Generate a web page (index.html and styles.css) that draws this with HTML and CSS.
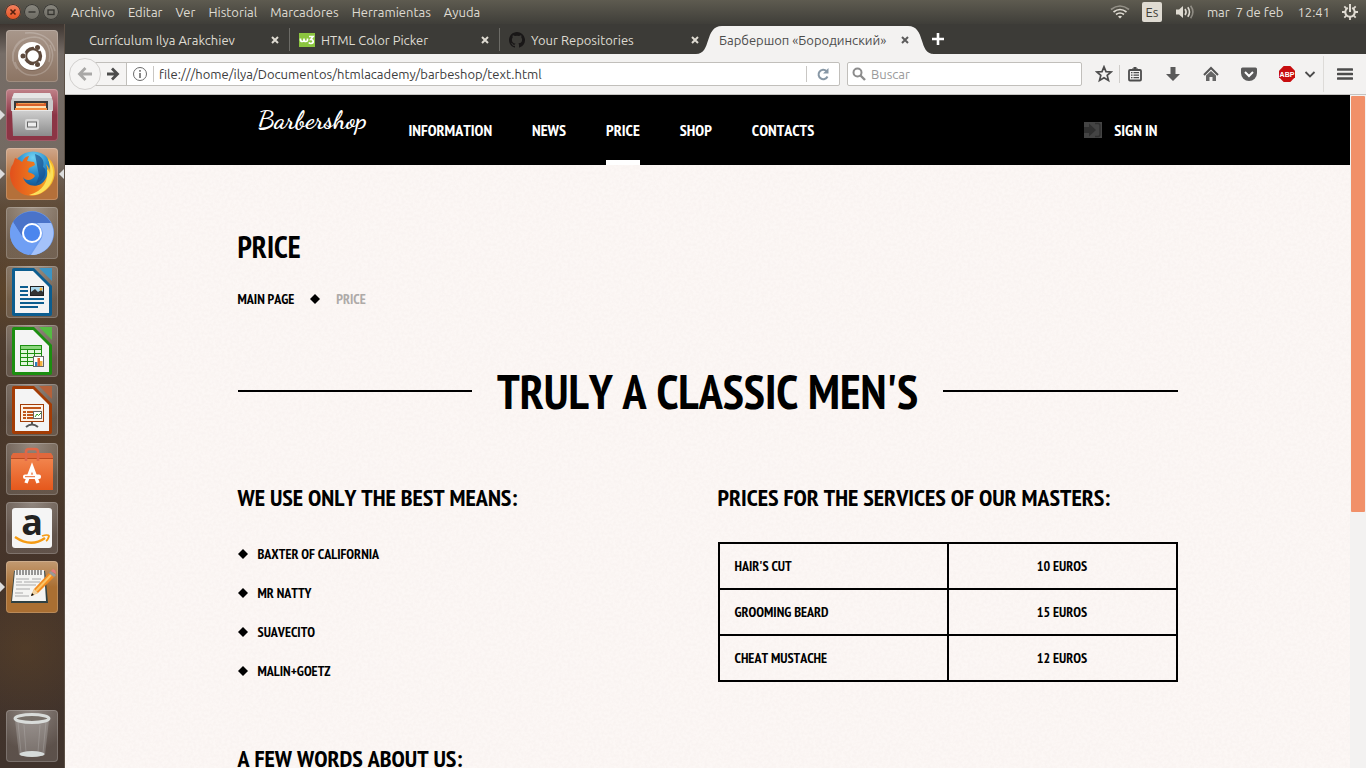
FILE: index.html
```html
<!DOCTYPE html>
<html lang="es">
<head>
<meta charset="utf-8">
<title>Барбершоп «Бородинский»</title>
<link rel="stylesheet" href="styles.css">
</head>
<body>
<header class="panel">
  <div class="window-controls">
    <button class="wc wc-close" aria-label="Cerrar"><svg viewBox="0 0 16 16" width="16" height="16"><path d="M5.5 5.5l5 5M10.500 5.500l-5 5" stroke="#53200f" stroke-width="1.600"/></svg></button>
    <button class="wc" aria-label="Minimizar"><svg viewBox="0 0 16 16" width="16" height="16"><path d="M4.500 8h7" stroke="#34332e" stroke-width="1.400"/></svg></button>
    <button class="wc" aria-label="Maximizar"><svg viewBox="0 0 16 16" width="16" height="16"><rect x="5" y="6" width="6" height="4.500" fill="none" stroke="#34332e" stroke-width="1.300"/></svg></button>
  </div>
  <nav class="app-menu" aria-label="Menú">
    <button>Archivo</button><button>Editar</button><button>Ver</button><button>Historial</button><button>Marcadores</button><button>Herramientas</button><button>Ayuda</button>
  </nav>
  <div class="indicators">
    <svg viewBox="0 0 20 16" width="20" height="16" fill="none" stroke="#dfdbd2" stroke-width="1.700"><path d="M1 5.500Q10-1.500 19 5.500" opacity=".45"/><path d="M3.500 8Q10 3 16.500 8"/><path d="M6 10.500Q10 7.500 14 10.500"/><path d="M8 12.500Q10 11.200 12 12.500L10 14.500z" fill="#dfdbd2" stroke="none"/></svg>
    <span class="lang">Es</span>
    <svg class="sound" viewBox="0 0 20 16" width="20" height="16" fill="none" stroke="#dfdbd2" stroke-width="1.600"><path d="M1 5.500h3L8 2v12l-4-3.500H1z" fill="#dfdbd2" stroke="none"/><path d="M10 5q2.200 3 0 6M12.800 3.300q3.400 4.700 0 9.400"/><path d="M15.600 1.800q4.600 6.200 0 12.400" opacity=".45"/></svg>
    <span class="date">mar&nbsp; 7 de feb</span>
    <span class="time">12:41</span>
    <svg viewBox="0 0 16 16" width="16" height="16" fill="none" stroke="#dfdbd2"><path d="M5.800 3.900a4.700 4.700 0 1 0 4.400 0" stroke-width="2"/><path d="M8 0v8" stroke-width="2"/><path d="M2.300 2.300l2 2M13.700 2.300l-2 2M0 8h3M13 8h3M2.300 13.700l2-2M13.700 13.700l-2-2M8 13v3" stroke-width="1.800"/></svg>
  </div>
</header>

<div class="desktop">
  <aside class="launcher" aria-label="Lanzador">
    <button class="tile tile-dash" aria-label="Inicio"><svg viewBox="0 0 52 52">
      <g fill="none" stroke="#fff" opacity=".2" stroke-width="1.500"><path d="M7 31C5 18 15 7 29 7c12 1 17 13 14 25"/><path d="M11 39C3 28 7 14 18 9M44 15c7 14-1 28-14 30C18 47 11 39 9 32M19 3C33 1 46 8 49 21"/></g>
      <circle cx="26" cy="27" r="14" fill="#5d493c" opacity=".35"/><circle cx="26" cy="26" r="14" fill="#fff"/>
      <circle cx="27" cy="26" r="7.500" fill="none" stroke="#5d493c" stroke-width="3.400"/>
      <path d="M19.500 26H18M30.700 19.600l1-1.700M30.700 32.400l1 1.700" stroke="#fff" stroke-width="7"/>
      <g fill="#5d493c"><circle cx="17" cy="26" r="2.500"/><circle cx="31.500" cy="17.500" r="2.500"/><circle cx="31.500" cy="34.500" r="2.500"/></g></svg></button>
    <button class="tile tile-files running" aria-label="Archivos"><svg viewBox="0 0 52 52">
      <defs><linearGradient id="steel" x2="0" y2="1"><stop stop-color="#d0d0d0"/><stop offset="1" stop-color="#8c8c8c"/></linearGradient></defs>
      <path d="M8 4h36l3 8v10H5V12z" fill="#c9c9c9"/><path d="M8 4h36l2 5H6z" fill="#e6e6e6"/><rect x="8" y="12" width="34" height="10" fill="#383838"/>
      <path d="M10 14h30v8H10z" fill="#d9622b"/><path d="M12 14.500h26" stroke="#f19a50"/><path d="M10 17h30v5H10z" fill="#fce1b5"/><path d="M9 19h32v4H9z" fill="#f58b3c"/>
      <path d="M6 21h40v26H7z" fill="url(#steel)"/><path d="M6 21.500h40" stroke="#e8e8e8"/><rect x="19" y="30" width="14" height="11" rx="2" fill="#d9d9d9"/><rect x="21.500" y="33" width="9" height="5" fill="#eee" stroke="#666"/></svg></button>
    <button class="tile tile-firefox running focused" aria-label="Firefox"><svg viewBox="0 0 52 52">
      <defs><radialGradient id="globe" cx=".5" cy=".15" r=".9"><stop stop-color="#6fd2f3"/><stop offset=".5" stop-color="#1e7fc4"/><stop offset="1" stop-color="#103567"/></radialGradient><linearGradient id="fox" x2="1" y2="0"><stop stop-color="#e2501c"/><stop offset=".6" stop-color="#ef7d1e"/><stop offset="1" stop-color="#f9c62c"/></linearGradient></defs>
      <circle cx="27" cy="24" r="20.500" fill="url(#globe)"/>
      <path d="M29 6c7 2 10 7 8 13 4 2 3 8 0 12l-7 5 3-8z" fill="#174b8b" opacity=".65"/>
      <path d="M9 10c3 1 5 2 7 4 2-4 4-6 7-6l-2 5 7 1 1 3-6 3-1 4c2 1 5 1 7 4-3 5-10 5-12 1 2 8 11 11 18 7 7-5 8-13 5-20 2 2 3 4 3 6 2-4 0-10-3-14 9 6 11 17 6 27C38 48 23 52 12 43 3 36 2 22 7 16z" fill="url(#fox)"/>
      <path d="M42 11c8 10 7 24-4 32-5 4-10 5-15 4 14-4 20-14 18-26 2 2 3 4 3 6 1-6 0-11-2-16z" fill="#fbe05a"/></svg></button>
    <button class="tile" aria-label="Chromium"><svg viewBox="0 0 52 52">
      <circle cx="26" cy="26" r="22" fill="#6b9cf0"/><path d="M7 15A22 22 0 0 1 45 16H26a10 10 0 0 0-9 6l-1 8z" fill="#4a73c9"/><path d="M7 15a22 22 0 0 0 16 33l9-14c-6 4-14 1-16-5z" fill="#6f9ff4"/><path d="M45 16a22 22 0 0 1-20 32l9-14c4-5 4-12-3-18z" fill="#a4c2fa"/>
      <circle cx="26" cy="26" r="10" fill="#fff"/><circle cx="26" cy="26" r="8" fill="#4b86ee"/></svg></button>
    <button class="tile" aria-label="Writer"><svg viewBox="0 0 52 52">
      <path d="M8 2h20l18 18v28q0 2-2 2H8q-2 0-2-2V4q0-2 2-2z" fill="#0c5d8f"/><path d="M33 2h13v13z" fill="#3d94c3"/><path d="M9 5h18l16 16v26H9z" fill="#f4f4f4"/>
      <path d="M14 21h8M14 25h8M14 29h8M14 33h24M14 37h24M14 41h18" stroke="#0c5d8f" stroke-width="1.800"/><rect x="24.500" y="20.500" width="13" height="9" fill="#a9d7ec" stroke="#222"/><path d="M25 29v-3l4-3 3 3 3-2 2 2v3z" fill="#333"/><circle cx="35" cy="23" r="1.500" fill="#f9b233"/></svg></button>
    <button class="tile" aria-label="Calc"><svg viewBox="0 0 52 52">
      <path d="M8 2h20l18 18v28q0 2-2 2H8q-2 0-2-2V4q0-2 2-2z" fill="#1c8e10"/><path d="M33 2h13v13z" fill="#55bb43"/><path d="M9 5h18l16 16v26H9z" fill="#f4f4f4"/>
      <rect x="14.500" y="20.500" width="21" height="20" fill="#e2f7dc" stroke="#1c8e10"/><path d="M15 24.500h20M15 28.500h20M15 32.500h20M15 36.500h20M21.500 21v19M28.500 21v19" stroke="#1c8e10"/><path d="M15 21h20v3H15z" fill="#8bd67c"/>
      <rect x="27.500" y="31.500" width="10" height="10" fill="#fff" stroke="#666"/><path d="M29 37h2.500v4H29z" fill="#2b7fc0"/><path d="M31.500 33H34v8h-2.500z" fill="#e0642c"/><path d="M34 36h2.500v5H34z" fill="#f3b33c"/></svg></button>
    <button class="tile" aria-label="Impress"><svg viewBox="0 0 52 52">
      <path d="M8 2h20l18 18v28q0 2-2 2H8q-2 0-2-2V4q0-2 2-2z" fill="#a33c05"/><path d="M33 2h13v13z" fill="#b5613a"/><path d="M9 5h18l16 16v26H9z" fill="#f4f4f4"/>
      <path d="M26 38v3M20 43q6-5 12 0" stroke="#555" stroke-width="2" fill="none"/><rect x="14.500" y="20.500" width="23" height="17" fill="#fdf1e5" stroke="#a33c05"/><path d="M17 24h18M17 28h3M17 31h3M17 34h3M21 28h6M21 31h6M21 34h6" stroke="#c05519" stroke-width="1.800"/><rect x="27.500" y="27.500" width="8" height="7" fill="#fff" stroke="#666"/><path d="M29 33l2-3 1.500 1.500L35 29" stroke="#2c9a20" fill="none"/></svg></button>
    <button class="tile" aria-label="Software"><svg viewBox="0 0 52 52">
      <defs><linearGradient id="bag" x2="0" y2="1"><stop stop-color="#f2854e"/><stop offset="1" stop-color="#e5581c"/></linearGradient></defs>
      <path d="M5 15h42v32H5z" fill="url(#bag)"/><path d="M5 13l2-3h38l2 3v3H5z" fill="#e0683c"/><path d="M5 15.500h42" stroke="#b94a20"/><path d="M20 18V9q0-3 3-3h6q3 0 3 3v9" fill="none" stroke="#df6747" stroke-width="2.600"/>
      <path d="M20 40l6-16 6 16" fill="none" stroke="#fff" stroke-width="3.400"/><rect x="17" y="31.500" width="18" height="4.500" rx="2" fill="#fff"/><path d="M19 33.700h10" stroke="#e9682f"/></svg></button>
    <button class="tile" aria-label="Amazon"><svg viewBox="0 0 52 52">
      <rect x="6" y="6" width="40" height="40" rx="3" fill="#f5f5f5"/><text x="26" y="33" text-anchor="middle" class="amazon">a</text><path d="M9 35q16 11 30 1" fill="none" stroke="#f59b13" stroke-width="2.400"/><path d="M36 34q6-2 7 0-1 4-3 5" fill="none" stroke="#f59b13" stroke-width="1.800"/></svg></button>
    <button class="tile tile-edit running" aria-label="Editor de textos"><svg viewBox="0 0 52 52">
      <path d="M8 10h31l3 32H5z" fill="#2f4143"/><path d="M9 9h29l2 31H6z" fill="#f4f4f2"/><path d="M11 9v5M14 9v5M17 9v5M20 9v5M23 9v5M26 9v5M29 9v5M32 9v5M35 9v5" stroke="#777" stroke-width="1.500"/><path d="M10 18h13M26 18h9M10 21h6M18 21h16M10 24h20M10 28h14M9 32h8M9 35h14" stroke="#aaa"/>
      <path d="M25 35l3-7L43 12l5 4-16 16z" fill="#f28c22"/><path d="M30 30L45 14" stroke="#fbc667" stroke-width="2"/><path d="M25 35l3-7 4 4z" fill="#f0d4a4"/><path d="M25 35l1-3 2 2z"/><path d="M43 12l2-2 5 4-2 2z" fill="#999"/><path d="M45 10l2-2q3 1 3 5z" fill="#e87a7c"/></svg></button>
    <button class="tile tile-trash" aria-label="Papelera"><svg viewBox="0 0 52 52">
      <path d="M9 10h34l-4 35q-13 4-26 0z" fill="#ddd" opacity=".25"/><path d="M12 12l3 31M40 12l-3 31M18 15l2 27M34 15l-2 27" stroke="#ddd" opacity=".2"/><ellipse cx="26" cy="44" rx="12.500" ry="3" fill="#d6dbda"/><ellipse cx="26" cy="8.500" rx="17" ry="4" fill="#776f68" stroke="#d9dcda" stroke-width="3"/></svg></button>
  </aside>

  <div class="browser">
    <div class="tabs">
      <div class="tab"><span class="tab-title">Currículum Ilya Arakchiev</span><button class="tab-close" aria-label="Cerrar pestaña"><svg viewBox="0 0 8 8" width="8" height="8"><path d="M1 1l6 6M7 1L1 7"/></svg></button></div>
      <div class="tab"><svg class="favicon" viewBox="0 0 16 16"><path d="M0 1h16v14H0z" fill="#8bc53f"/><path d="M1.500 6.500v1q0 2 1.800 2t1.700-2v-1 1q0 2 1.800 2t1.700-2v-1M10 4.500h4l-2.300 3q2.500.2 2.500 2t-2.200 2q-1.500 0-2.200-1" fill="none" stroke="#fff" stroke-width="1.700"/></svg><span class="tab-title">HTML Color Picker</span><button class="tab-close" aria-label="Cerrar pestaña"><svg viewBox="0 0 8 8" width="8" height="8"><path d="M1 1l6 6M7 1L1 7"/></svg></button></div>
      <div class="tab"><svg class="favicon" viewBox="0 0 16 16"><path fill="#191717" d="M8 0C3.600 0 0 3.600 0 8c0 3.500 2.300 6.500 5.500 7.600.4.100.5-.2.500-.4v-1.400c-2.200.5-2.700-1-2.700-1-.4-.9-.9-1.200-.9-1.200-.7-.5.100-.5.100-.5.800.1 1.200.8 1.200.8.700 1.300 1.900.9 2.300.7.100-.5.300-.9.500-1.100-1.800-.2-3.600-.9-3.600-4 0-.9.300-1.600.8-2.100-.1-.2-.4-1 .1-2.100 0 0 .7-.2 2.200.8a7.500 7.500 0 0 1 4 0c1.500-1 2.200-.8 2.200-.8.400 1.100.2 1.900.1 2.100.5.600.8 1.300.8 2.100 0 3.100-1.900 3.700-3.700 3.900.3.400.6.900.6 1.600v2.200c0 .200.100.5.500.4A8 8 0 0 0 8 0z"/></svg><span class="tab-title">Your Repositories</span><button class="tab-close" aria-label="Cerrar pestaña"><svg viewBox="0 0 8 8" width="8" height="8"><path d="M1 1l6 6M7 1L1 7"/></svg></button></div>
      <div class="tab tab-active"><svg class="tab-shape" viewBox="0 0 238 28" preserveAspectRatio="none"><path d="M0 28C16 28 8 0 26 0H212C230 0 222 28 238 28z" fill="#f3f2f1"/></svg><span class="tab-title">Барбершоп «Бородинский»</span><button class="tab-close" aria-label="Cerrar pestaña"><svg viewBox="0 0 8 8" width="8" height="8"><path d="M1 1l6 6M7 1L1 7"/></svg></button></div>
      <button class="new-tab" aria-label="Nueva pestaña"><svg viewBox="0 0 14 14" width="14" height="14"><path d="M7 1v12M1 7h12" stroke="#fff" stroke-width="2.600"/></svg></button>
    </div>

    <div class="toolbar">
      <button class="back" aria-label="Atrás"><svg viewBox="0 0 16 16" width="16" height="16"><path d="M8.500 2L2.500 8l6 6M3 8h12" fill="none" stroke="#a9a8a7" stroke-width="2.800"/></svg></button>
      <div class="url-box">
        <button class="forward" aria-label="Adelante"><svg viewBox="0 0 14 14" width="14" height="14"><path d="M6 1.500L11.500 7 6 12.500M1 7h10" fill="none" stroke="#4c4c4c" stroke-width="2.800"/></svg></button>
        <svg class="info" viewBox="0 0 16 16" width="16" height="16"><circle cx="8" cy="8" r="6.500" fill="none" stroke="#6a6a6a"/><path d="M8 7v5M8 4v1.800" stroke="#6a6a6a" stroke-width="1.600"/></svg>
        <input class="url" aria-label="Dirección" value="file:///home/ilya/Documentos/htmlacademy/barbeshop/text.html">
        <button class="reload" aria-label="Recargar"><svg viewBox="0 0 14 14" width="14" height="14"><path d="M11.500 9.500A4.700 4.700 0 1 1 10.500 4" fill="none" stroke="#8797a5" stroke-width="2"/><path d="M12.500 1v5.500H7z" fill="#8797a5"/></svg></button>
      </div>
      <label class="search-box"><svg viewBox="0 0 14 14" width="14" height="14"><circle cx="5.500" cy="5.500" r="4" fill="none" stroke="#8c8c8c" stroke-width="2"/><path d="M8.500 8.500L13 13" stroke="#8c8c8c" stroke-width="2.400"/></svg><input class="search" aria-label="Buscar" placeholder="Buscar"></label>
      <div class="tools">
        <button aria-label="Marcar"><svg viewBox="0 0 18 18" width="18" height="18"><path d="M9 1.800l2 4.800 5.200.4-4 3.400 1.300 5.100L9 12.700l-4.500 2.800 1.300-5.100-4-3.400L7 6.600z" fill="none" stroke="#4c4c4c" stroke-width="1.700"/></svg></button>
        <button class="ruled" aria-label="Marcadores"><svg viewBox="0 0 16 16" width="16" height="16" fill="none" stroke="#4c4c4c"><rect x="2" y="4" width="12" height="10.500" rx="1" stroke-width="1.800"/><path d="M5 3.500h6" stroke-width="2"/><path d="M8 1v2" stroke-width="3"/><path d="M4 6.700h1.500M4 9.200h1.500M4 11.700h1.500M6.500 6.700H12M6.500 9.200H12M6.500 11.700H12" stroke-width="1.300"/></svg></button>
        <button aria-label="Descargas"><svg viewBox="0 0 16 16" width="16" height="16"><path d="M5.500 1h5v7H15l-7 7-7-7h4.500z" fill="#5a5a5a"/></svg></button>
        <button aria-label="Inicio"><svg viewBox="0 0 16 16" width="16" height="16"><path d="M1 9l7-7 7 7" fill="none" stroke="#555" stroke-width="2"/><path d="M3 9.500L8 5l5 4.500V15H9.500v-4h-3v4H3z" fill="#666"/></svg></button>
        <button aria-label="Pocket"><svg viewBox="0 0 16 16" width="16" height="16"><path d="M1.500 1.500h13q1.500 0 1.500 1.500v4a8 8 0 0 1-16 0V3q0-1.500 1.500-1.500z" fill="#5a5a5a"/><path d="M4 6l4 4 4-4" fill="none" stroke="#fff" stroke-width="2"/></svg></button>
        <button aria-label="Adblock Plus"><svg viewBox="0 0 16 16" width="16" height="16"><path d="M4.700 0h6.600L16 4.700v6.600L11.300 16H4.700L0 11.300V4.700z" fill="#c70d0f"/><text x="8" y="11" text-anchor="middle" class="abp">ABP</text></svg></button>
        <button class="drop" aria-label="Opciones de Adblock"><svg viewBox="0 0 12 12" width="12" height="12"><path d="M1.500 4L6 8.500 10.500 4" fill="none" stroke="#4c4c4c" stroke-width="1.800"/></svg></button>
        <button class="menu" aria-label="Abrir menú"><svg viewBox="0 0 16 14" width="16" height="14"><path d="M1 2.500h14M1 7h14M1 11.500h14" stroke="#4c4c4c" stroke-width="2.600" stroke-linecap="round"/></svg></button>
      </div>
    </div>

    <div class="viewport">
      <div class="page">
        <header class="site-header">
          <div class="container header-row">
            <a class="logo" href="#">Barbershop</a>
            <nav class="site-nav"><a href="#">Information</a><a href="#">News</a><a class="current" href="#">Price</a><a href="#">Shop</a><a href="#">Contacts</a></nav>
            <a class="sign-in" href="#"><svg viewBox="0 0 18 16" width="18" height="16"><path d="M0 0h18v16H0z" fill="#444"/><path d="M0 5h5V1.500L12 8l-7 6.500V11H0z" fill="#303030"/><path d="M11 1.500h3q2 0 2 2v9q0 2-2 2h-3" fill="none" stroke="#303030" stroke-width="1.500"/></svg>Sign in</a>
          </div>
        </header>
        <main class="container content">
          <h1 class="page-title">Price</h1>
          <nav class="breadcrumbs"><a href="#">Main page</a><svg class="diamond" viewBox="0 0 10 10"><path d="M5 0l5 5-5 5-5-5z"/></svg><span class="here">Price</span></nav>
          <h2 class="headline">Truly a classic men's</h2>
          <div class="columns">
            <section>
              <h3 class="subtitle">We use only the best means:</h3>
              <ul class="brands">
                <li><svg class="diamond" viewBox="0 0 10 10"><path d="M5 0l5 5-5 5-5-5z"/></svg>Baxter of California</li>
                <li><svg class="diamond" viewBox="0 0 10 10"><path d="M5 0l5 5-5 5-5-5z"/></svg>Mr Natty</li>
                <li><svg class="diamond" viewBox="0 0 10 10"><path d="M5 0l5 5-5 5-5-5z"/></svg>Suavecito</li>
                <li><svg class="diamond" viewBox="0 0 10 10"><path d="M5 0l5 5-5 5-5-5z"/></svg>Malin+Goetz</li>
              </ul>
            </section>
            <section>
              <h3 class="subtitle">Prices for the services of our masters:</h3>
              <table class="prices">
                <tr><td>Hair's cut</td><td>10 euros</td></tr>
                <tr><td>Grooming beard</td><td>15 euros</td></tr>
                <tr><td>Cheat mustache</td><td>12 euros</td></tr>
              </table>
            </section>
          </div>
          <h3 class="subtitle about">A few words about us:</h3>
        </main>
      </div>
      <div class="scrollbar"><div class="thumb"></div></div>
    </div>
  </div>
</div>
</body>
</html>
```
FILE: styles.css
```css
* { box-sizing: border-box; }
body {
  margin: 0;
  height: 100vh;
  display: flex;
  flex-direction: column;
  overflow: hidden;
  font: 13px/20px "Ubuntu", "Open Sans", "Noto Sans", sans-serif;
}
button { padding: 0; border: 0; background: none; color: inherit; font: inherit; }
input { border: 0; outline: 0; padding: 0; min-width: 0; background: none; font: inherit; color: #3c3c3c; }
a { color: inherit; text-decoration: none; }
svg { display: block; flex: none; }

/* System panel */
.panel {
  height: 24px;
  flex: none;
  display: flex;
  align-items: center;
  background: linear-gradient(#5e5b50, #3f3e39);
  color: #dfdbd2;
}
.window-controls { display: flex; gap: 3px; padding-left: 5px; }
.wc { width: 16px; height: 16px; border-radius: 50%; background: linear-gradient(#8a8880, #6b6961); box-shadow: inset 0 0 0 1px #3a3934; }
.wc-close { background: linear-gradient(#f58463, #e4501e); }
.app-menu { display: flex; gap: 13px; margin-left: 12px; }
.indicators { display: flex; align-items: center; margin-left: auto; padding-right: 8px; }
.lang { width: 20px; height: 20px; margin: 0 13px 0 12px; border-radius: 2px; background: #dfdbd2; color: #3f3e39; text-align: center; }
.date { margin-left: 12px; }
.time { margin: 0 12px 0 14px; }

.desktop { flex: 1; min-height: 0; display: flex; }

/* Launcher */
.launcher {
  width: 65px;
  flex: none;
  display: flex;
  flex-direction: column;
  gap: 7px;
  padding: 6px;
  border-right: 1px solid #5c5046;
  background:
    radial-gradient(circle at 60% 27%, #6c523988, transparent 60px),
    radial-gradient(circle at 20% 36%, #68482288, transparent 50px),
    radial-gradient(circle at 80% 58%, #5c442b88, transparent 60px),
    radial-gradient(circle at 40% 84%, #65482666, transparent 70px),
    linear-gradient(#3d3530, #766d67 4%, #746a62 18%, #594736 25%, #49382b 50%, #45342a 75%, #40332c);
}
.tile {
  position: relative;
  width: 52px;
  height: 52px;
  flex: none;
  border-radius: 4px;
  background: radial-gradient(circle at 50% 0, #ffffff66, #ffffff26 70%);
  box-shadow: inset 0 0 0 1px #ffffff30;
}
.tile svg { width: 52px; height: 52px; overflow: visible; }
.tile-dash { background: linear-gradient(#a8978b, #8c7463); }
.tile-files { background: linear-gradient(#c08289, #8c3545 50%); }
.tile-firefox { background: linear-gradient(#d0a78b, #b4703a 60%); }
.tile-edit { background: linear-gradient(#c29a72, #aa6f32 50%); }
.tile-trash { margin-top: auto; }
.running::before {
  content: "";
  position: absolute;
  left: -6px;
  top: 21px;
  border: 5px solid transparent;
  border-left-color: #ddd;
  border-right-width: 0;
}
.focused::after {
  content: "";
  position: absolute;
  right: -6px;
  top: 21px;
  border: 5px solid transparent;
  border-right-color: #ddd;
  border-left-width: 0;
}
.amazon { font: bold 36px "Open Sans", sans-serif; fill: #222; }

/* Browser chrome */
.browser { flex: 1; min-width: 0; display: flex; flex-direction: column; }
.tabs { height: 30px; flex: none; display: flex; padding-left: 14px; background: #3c3b37; color: #dfdbd2; }
.tab { position: relative; width: 210px; display: flex; align-items: center; gap: 6px; padding: 2px 10px 0 9px; border-left: 1px solid transparent; }
.tab:nth-child(2), .tab:nth-child(3) { border-image: linear-gradient(transparent 16%, #6c6b66 16% 86%, transparent 86%) 1; }
.tab-title { position: relative; white-space: nowrap; }
.tab-active { color: #4c4c4c; }
.tab-shape { position: absolute; left: -14px; top: 2px; width: 238px; height: 28px; }
.tab-close { position: relative; margin-left: auto; }
.tab-close path { stroke: #dfdbd2; stroke-width: 2; }
.tab-active .tab-close path { stroke: #5c5c5c; }
.favicon { width: 16px; height: 16px; }
.new-tab { margin-left: 12px; }

.toolbar { height: 41px; flex: none; display: flex; align-items: center; padding-left: 4px; background: #f3f2f1; border-bottom: 1px solid #c5c3c0; }
.back { position: relative; width: 32px; height: 32px; flex: none; display: grid; place-items: center; border: 1px solid #d2d0ce; border-radius: 50%; background: #f5f4f3; }
.url-box { flex: 1; height: 24px; min-width: 0; display: flex; align-items: center; margin-left: -16px; border: 1px solid #c1bfbb; border-radius: 2px; background: #fff; }
.forward { width: 41px; height: 22px; flex: none; display: grid; place-items: center end; padding-right: 6px; border-right: 1px solid #c1bfbb; background: #f5f4f3; }
.info { margin: 0 5px; }
.url { flex: 1; height: 16px; padding-left: 5px; border-left: 1px solid #c9c7c4; }
.reload { width: 33px; height: 16px; display: grid; place-items: center; border-left: 1px solid #c9c7c4; }
.search-box { width: 235px; height: 24px; flex: none; display: flex; align-items: center; gap: 5px; margin-left: 7px; padding: 0 4px; border: 1px solid #c1bfbb; border-radius: 2px; background: #fff; }
.search { flex: 1; }
.search::placeholder { color: #9a9a9a; }
.tools { height: 40px; flex: none; display: flex; align-items: center; gap: 8px; margin-left: 7px; }
.tools button { width: 30px; height: 18px; display: grid; place-items: center; }
.tools .ruled { width: 31px; margin-left: -8px; border-left: 1px solid #cfcdca; }
.tools .drop { width: 16px; margin-left: -8px; }
.tools .menu { width: 43px; height: 36px; margin-left: -3px; border-left: 1px solid #dddbd8; }
.abp { font: bold 7px "Liberation Sans", sans-serif; fill: #fff; }

/* Web page */
.viewport { flex: 1; min-height: 0; display: flex; }
.page {
  flex: 1;
  min-width: 0;
  overflow: hidden;
  background: #fcf7f5 url("data:image/svg+xml,%3Csvg xmlns='http://www.w3.org/2000/svg' width='200' height='200'%3E%3Cfilter id='n'%3E%3CfeTurbulence type='fractalNoise' baseFrequency='.35' numOctaves='3' stitchTiles='stitch'/%3E%3CfeColorMatrix values='0 0 0 0 .6 0 0 0 0 .5 0 0 0 0 .45 .14 0 0 0 -.045'/%3E%3C/filter%3E%3Crect width='200' height='200' filter='url(%23n)'/%3E%3C/svg%3E");
  color: #000;
  font-family: "PT Sans Narrow", "Open Sans Condensed", "Roboto Condensed", sans-serif;
  font-weight: bold;
  font-size: 14px;
  font-kerning: none;
  text-transform: uppercase;
}
.container { max-width: 940px; margin: 0 auto; }
.site-header { height: 70px; background: #000; color: #fff; font-size: 16px; }
.header-row { height: 100%; display: flex; align-items: center; padding: 0 20px; }
.logo { width: 151px; padding-bottom: 20px; font: bold 26px/28px "Dancing Script", "Liberation Serif", serif; text-transform: none; }
.site-nav { height: 100%; display: flex; gap: 40px; }
.site-nav a { height: 100%; padding-top: 25px; border-bottom: 5px solid transparent; }
.site-nav .current { border-color: #fff; }
.sign-in { display: flex; align-items: center; gap: 12px; margin-left: auto; }
.content { padding-top: 62px; }
.page-title { margin: 0; font-size: 30px; line-height: 40px; }
.breadcrumbs { display: flex; align-items: center; gap: 16px; margin-top: 22px; }
.diamond { width: 10px; height: 10px; }
.here { color: #aeaaa8; }
.headline { display: flex; align-items: center; gap: 25px; margin: 52px 0 62px; font-size: 48px; line-height: 60px; }
.headline::before, .headline::after { content: ""; flex: 1; height: 2px; background: #000; }
.columns { display: grid; grid-template-columns: 1fr 1fr; gap: 20px; }
.subtitle { margin: 0; font-size: 24px; line-height: 30px; }
.brands { display: flex; flex-direction: column; gap: 19px; margin: 31px 0 0; padding: 0; list-style: none; }
.brands li { display: flex; align-items: center; gap: 10px; }
.prices { width: 100%; margin-top: 29px; border-collapse: collapse; table-layout: fixed; }
.prices td { height: 46px; padding: 0 15px; border: 2px solid #000; }
.prices td + td { text-align: center; }
.about { margin-top: 62px; }

.scrollbar { width: 16px; flex: none; padding: 1px; background: #f3f2f1; }
.thumb { height: 62%; border-radius: 1px; background: #f19069; }
```
